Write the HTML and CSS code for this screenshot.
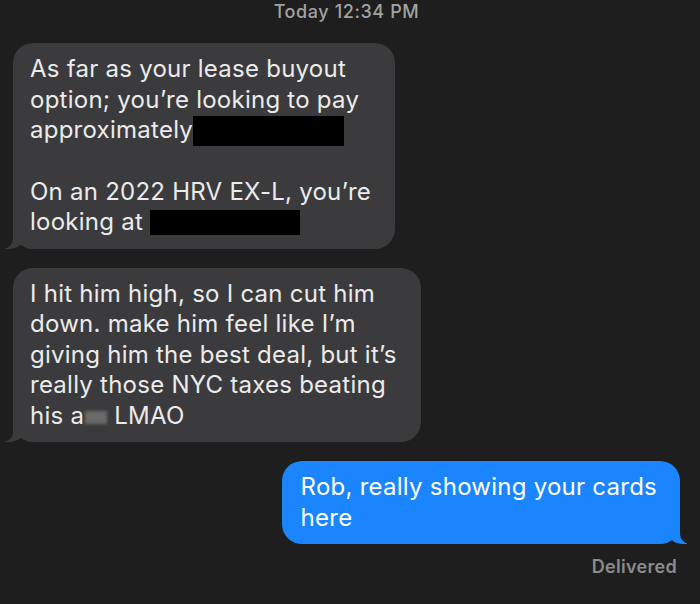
FILE: index.html
```html
<!DOCTYPE html>
<html lang="en">
<head>
    <meta charset="UTF-8">
    <meta name="viewport" content="width=device-width, initial-scale=1.0">
    <title>Messages</title>
    <link rel="stylesheet" href="styles.css">
</head>
<body>
    <div class="thread">
        <div class="stamp">Today 12:34 PM</div>

        <div class="row them">
            <div class="bubble grey">
                As far as your lease buyout<br>
                option; you’re looking to pay<br>
                approximately<span class="redact tall"></span><br>
                <br>
                On an 2022 HRV EX-L, you’re<br>
                looking at <span class="redact"></span>
            </div>
        </div>

        <div class="row them">
            <div class="bubble grey">
                I hit him high, so I can cut him<br>
                down. make him feel like I’m<br>
                giving him the best deal, but it’s<br>
                really those NYC taxes beating<br>
                his a<span class="blur"></span> LMAO
            </div>
        </div>

        <div class="row me">
            <div class="bubble blue">
                Rob, really showing your cards<br>
                here
            </div>
        </div>

        <div class="status">Delivered</div>
    </div>
</body>
</html>
```

FILE: styles.css
```css
body {
    margin: 0;
    background-color: #1e1e1e;
    font-family: Inter, "Noto Sans", sans-serif;
}
.thread {
    padding: 0 20px 0 13px;
}
.stamp {
    text-align: center;
    color: #a3a3a3;
    font-size: 18px;
    font-weight: 500;
    letter-spacing: 0.6px;
    line-height: 24px;
    margin-bottom: 19px;
}
.row {
    display: flex;
    margin-bottom: 19px;
}
.me {
    justify-content: flex-end;
    margin-bottom: 12px;
}
.bubble {
    position: relative;
    z-index: 0;
    padding: 11px 24px 11px 17px;
    border-radius: 20px;
    font-size: 24px;
    letter-spacing: 0.25px;
    line-height: 30.5px;
    white-space: nowrap;
}
.grey {
    background-color: #3b3b3d;
    color: #ebebeb;
}
.blue {
    background-color: #1a85fc;
    color: #ffffff;
    padding-left: 19px;
    padding-right: 23px;
}
/* tails */
.bubble::before,
.bubble::after {
    content: "";
    position: absolute;
    bottom: 0;
    height: 20px;
    z-index: -1;
}
.grey::before {
    left: -8px;
    width: 20px;
    background-color: #3b3b3d;
    border-bottom-right-radius: 15px;
}
.grey::after {
    left: -10px;
    width: 10px;
    background-color: #1e1e1e;
    border-bottom-right-radius: 10px;
}
.blue::before {
    right: -7px;
    width: 20px;
    background-color: #1a85fc;
    border-bottom-left-radius: 15px;
}
.blue::after {
    right: -10px;
    width: 10px;
    background-color: #1e1e1e;
    border-bottom-left-radius: 10px;
}
.redact {
    display: inline-block;
    width: 150px;
    height: 25px;
    background-color: #000000;
    vertical-align: -5px;
}
.redact.tall {
    width: 151px;
    height: 30px;
    vertical-align: -8px;
}
.blur {
    display: inline-block;
    width: 22px;
    height: 13px;
    margin-left: 1px;
    background-color: #6a6a6a;
    filter: blur(1.5px);
}
.status {
    text-align: right;
    padding-right: 3px;
    color: #8c8c8c;
    font-size: 18px;
    font-weight: 600;
    letter-spacing: 0.3px;
}
```
